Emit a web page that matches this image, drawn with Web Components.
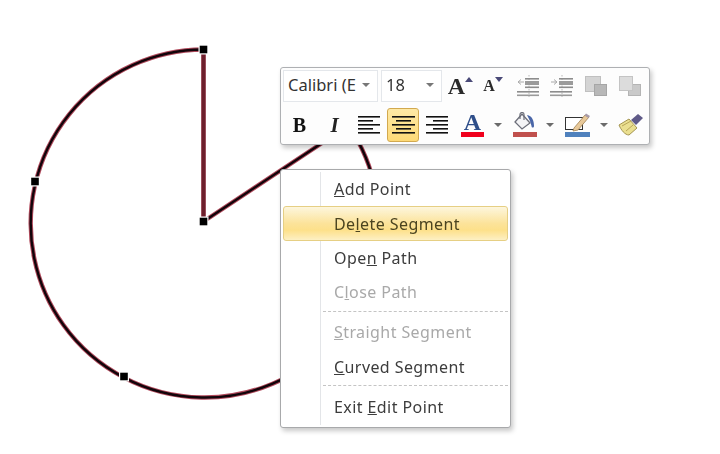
<!DOCTYPE html>
<html>
<head>
<meta charset="utf-8">
<style>
  html, body { margin: 0; background: #fff; }
  body { width: 720px; height: 454px; overflow: hidden; font-family: "Noto Sans", "Open Sans", sans-serif; }
</style>
</head>
<body>
<edit-canvas>
  <shape-path></shape-path>
  <mini-toolbar></mini-toolbar>
  <context-menu>
    <menu-item><u>A</u>dd Point</menu-item>
    <menu-item hot>De<u>l</u>ete Segment</menu-item>
    <menu-item>Ope<u>n</u> Path</menu-item>
    <menu-item disabled>C<u>l</u>ose Path</menu-item>
    <menu-sep></menu-sep>
    <menu-item disabled><u>S</u>traight Segment</menu-item>
    <menu-item><u>C</u>urved Segment</menu-item>
    <menu-sep style="height:6px"></menu-sep>
    <menu-item>Exit <u>E</u>dit Point</menu-item>
  </context-menu>
</edit-canvas>

<script>
class EditCanvas extends HTMLElement {
  constructor() {
    super();
    this.attachShadow({ mode: "open" });
    this.shadowRoot.innerHTML = `
      <style>
        :host { display: block; position: relative; width: 720px; height: 454px; background: #fff; }
      </style>
      <slot></slot>`;
  }
}

// the pie shape with its edit points, free on the slide
class ShapePath extends HTMLElement {
  constructor() {
    super();
    this.attachShadow({ mode: "open" });
    const d = "M203.5 49.5 A174 174 0 1 0 348.5 125.5 L203.5 221.5 Z";
    const nodes = [[203.5, 49.5], [35, 181.5], [124, 376.5], [203.5, 221.5]];
    this.shadowRoot.innerHTML = `
      <style>
        :host { display: block; position: absolute; inset: 0; }
        svg { display: block; filter: blur(.35px); }
      </style>
      <svg width="720" height="454" viewBox="0 0 720 454" fill="none">
        <path d="${d}" stroke="#b04a5c" stroke-width="4.4"/>
        <path d="${d}" stroke="#12040a" stroke-width="2.4"/>
        <path d="M203.5 50 V221" stroke="#6d1f2c" stroke-width="4"/>
        ${nodes.map(n => `<rect x="${n[0] - 5}" y="${n[1] - 5}" width="10" height="10" fill="#fff"/><rect x="${n[0] - 3.8}" y="${n[1] - 3.8}" width="7.6" height="7.6" fill="#000"/>`).join("")}
      </svg>`;
  }
}

class MiniToolbar extends HTMLElement {
  constructor() {
    super();
    this.attachShadow({ mode: "open" });
    const lines = (rows) => rows.map(r => `<rect x="${r[0]}" y="${r[1]}" width="${r[2]}" height="${r[3] || 1.6}" fill="${r[4] || "#111"}"/>`).join("");
    const indentLines = (x) => `
      <path d="M12 0V22" stroke="#b9b9b9" stroke-dasharray="1.5 2"/>
      ${lines([[x, 3, 14, 1.6, "#8d8d8d"], [x, 6, 14, 4, "#9b9b9b"], [x, 11.5, 14, 1.6, "#8d8d8d"], [0, 16, 22, 1.6, "#8d8d8d"], [0, 19.5, 22, 1.6, "#9a9a9a"]])}`;
    this.shadowRoot.innerHTML = `
      <style>
        :host {
          display: block; position: absolute; left: 280px; top: 67px; width: 370px; height: 78px;
          box-sizing: border-box; padding: 2px 2px 1px; background: #fdfdfd;
          border: 1px solid #aeb0b3; border-radius: 3px;
          box-shadow: 2px 3px 5px rgba(0,0,0,.22);
          font-family: "Noto Sans", "Open Sans", sans-serif; color: #333;
          filter: blur(.3px);
        }
        .row { display: flex; align-items: center; height: 32px; }
        .row + .row { height: 34px; margin-top: 6px; }
        .serif { font-family: "Liberation Serif", serif; font-weight: 700; line-height: 1; }
        svg { display: block; }
        .grow { font-size: 24px; color: #2a2a2a; }
        .shrink { font-size: 16px; color: #2a2a2a; }
        .caret { margin-bottom: 14px; }
        .b { font-size: 20px; color: #111; }
        .i { font-size: 21px; color: #222; font-style: italic; }
        .color-a { font-size: 24px; color: #2f4f8a; margin-bottom: -2px; }
        .bar { align-self: stretch; height: 5px; flex: none; }
      </style>
      <div class="row">
        <combo-box style="--w:95px" label="Calibri (E"></combo-box>
        <combo-box style="--w:61px;margin-left:3px" label="18"></combo-box>
        <tool-button style="--w:27px;margin-left:5px"><span class="serif grow">A</span><svg class="caret" width="8" height="5"><path d="M0 5H8L4 0Z" fill="#4a4a78"/></svg></tool-button>
        <tool-button style="--w:24px;margin-left:7px"><span class="serif shrink">A</span><svg class="caret" width="8" height="5"><path d="M0 0H8L4 5Z" fill="#4a4a78"/></svg></tool-button>
        <tool-button style="--w:22px;margin-left:12px"><svg width="22" height="22">${indentLines(8)}<path d="M7 7H1M4 4.5L1 7L4 9.5" stroke="#a9a9a9" fill="none"/></svg></tool-button>
        <tool-button style="--w:23px;margin-left:11px"><svg width="23" height="22">${indentLines(9)}<path d="M1 7H7M4 4.5L7 7L4 9.5" stroke="#a9a9a9" fill="none"/></svg></tool-button>
        <tool-button style="--w:22px;margin-left:12px"><svg width="22" height="20"><rect x=".5" y=".5" width="15" height="15" fill="#d4d4d4" stroke="#c0c0c0"/><rect x="9.5" y="8.5" width="12" height="11" fill="#b8b8b8" stroke="#a6a6a6"/></svg></tool-button>
        <tool-button style="--w:22px;margin-left:12px"><svg width="22" height="20"><rect x="9.5" y="8.5" width="12" height="11" fill="#c9c9c9" stroke="#b4b4b4"/><rect x=".5" y=".5" width="13" height="14" fill="#dcdcdc" stroke="#c4c4c4"/></svg></tool-button>
      </div>
      <div class="row">
        <tool-button style="--w:15px;margin-left:9px"><span class="serif b">B</span></tool-button>
        <tool-button style="--w:15px;margin-left:20px"><span class="serif i">I</span></tool-button>
        <tool-button style="--w:22px;margin-left:16px"><svg width="22" height="18">${lines([[0, 0, 22], [0, 4, 15], [0, 8, 22], [0, 12, 15], [0, 16, 22]])}</svg></tool-button>
        <tool-button active style="--w:32px;margin-left:7px"><svg width="23" height="18">${lines([[0, 0, 23], [4, 4, 15], [0, 8, 23], [4, 12, 15], [0, 16, 23]])}</svg></tool-button>
        <tool-button style="--w:22px;margin-left:7px"><svg width="22" height="18">${lines([[0, 0, 22], [7, 4, 15], [0, 8, 22], [7, 12, 15], [0, 16, 22]])}</svg></tool-button>
        <tool-button column style="--w:23px;margin-left:13px"><span class="serif color-a">A</span><div class="bar" style="background:#f0001c"></div></tool-button>
        <drop-arrow style="margin-left:9px"></drop-arrow>
        <tool-button column style="--w:24px;margin-left:10px">
          <svg width="24" height="20"><path d="M9 2L17 11L9 17L2 10Z" fill="#f4f4f6" stroke="#6d6f7a" stroke-width="1.3"/><path d="M7 7V2.5A2 2 0 0 1 11 2.5V8" fill="none" stroke="#6d6f7a" stroke-width="1.2"/><path d="M14 3C19 4 21 8 21 14C21 16 18.500 16 18.500 14L17 9Z" fill="#4a66a8"/></svg>
          <div class="bar" style="background:#c0504d"></div></tool-button>
        <drop-arrow style="margin-left:8px"></drop-arrow>
        <tool-button column style="--w:25px;margin-left:10px">
          <svg width="25" height="20"><rect x=".5" y="5.500" width="17" height="12" fill="#fff" stroke="#333"/><path d="M9 16L20 3L24 5L13 18L8 19Z" fill="#e8c99a" stroke="#a08050" stroke-width=".8"/><path d="M19.500 3.500L21 1.500L25 4L23.500 6Z" fill="#a89ba8"/></svg>
          <div class="bar" style="background:#4f81bd"></div></tool-button>
        <drop-arrow style="margin-left:9px"></drop-arrow>
        <tool-button style="--w:25px;margin-left:9px"><svg width="25" height="23"><path d="M1 11L11 5L19 14L11 21C7 21 3 16 1 11Z" fill="#eadf90" stroke="#a39450"/><path d="M4 12L13 7M8 17L15 11" stroke="#b8a658"/><path d="M13 6L20 0L25 4L18 11Z" fill="#5f5a88"/></svg></tool-button>
      </div>`;
  }
}

class ComboBox extends HTMLElement {
  constructor() {
    super();
    this.attachShadow({ mode: "open" });
    this.shadowRoot.innerHTML = `
      <style>
        :host {
          display: flex; align-items: center; justify-content: space-between; flex: none;
          width: var(--w); height: 32px; box-sizing: border-box; padding: 0 7px 3px 4px;
          background: #fff; border: 1px solid #e4e7eb; font-size: 16.5px; color: #333;
          white-space: nowrap; overflow: hidden;
        }
        i { flex: none; width: 0; height: 0; border: 4px solid transparent; border-top: 4px solid #777; border-bottom: 0; }
      </style>
      <span></span><i></i>`;
    this.shadowRoot.querySelector("span").textContent = this.getAttribute("label");
  }
}

class ToolButton extends HTMLElement {
  constructor() {
    super();
    this.attachShadow({ mode: "open" });
    this.shadowRoot.innerHTML = `
      <style>
        :host {
          display: flex; align-items: center; justify-content: center; flex: none;
          width: var(--w); height: 34px; box-sizing: border-box;
        }
        :host([column]) { flex-direction: column; justify-content: flex-end; padding-bottom: 5px; }
        :host([active]) {
          background: linear-gradient(#fee9a6, #fdd977); border: 1px solid #d2a94f; border-radius: 3px;
        }
      </style>
      <slot></slot>`;
  }
}

class DropArrow extends HTMLElement {
  constructor() {
    super();
    this.attachShadow({ mode: "open" });
    this.shadowRoot.innerHTML = `
      <style>
        :host { display: flex; justify-content: center; flex: none; width: 10px; }
        i { width: 0; height: 0; border: 4px solid transparent; border-top: 4px solid #6b6b6b; border-bottom: 0; }
      </style>
      <i></i>`;
  }
}

class ContextMenu extends HTMLElement {
  constructor() {
    super();
    this.attachShadow({ mode: "open" });
    this.shadowRoot.innerHTML = `
      <style>
        :host {
          display: flex; flex-direction: column; position: absolute; left: 280px; top: 169px;
          width: 231px; height: 259px; box-sizing: border-box; padding: 2px;
          background: #fff linear-gradient(#e3e5e8, #e3e5e8) 39px 2px / 1px calc(100% - 4px) no-repeat;
          border: 1px solid #a8a9ab; border-radius: 3px;
          box-shadow: 2px 3px 5px rgba(0,0,0,.22);
          font-family: "Noto Sans", "Open Sans", sans-serif;
        }
      </style>
      <slot></slot>`;
  }
}

class MenuItem extends HTMLElement {
  constructor() {
    super();
    this.attachShadow({ mode: "open" });
    this.shadowRoot.innerHTML = `
      <style>
        :host {
          display: flex; align-items: center; flex: none; height: 34.4px; box-sizing: border-box;
          padding-left: 51px; font-size: 16px; letter-spacing: .42px; color: #3c3c3c;
          white-space: pre; filter: blur(.25px);
        }
        :host([disabled]) { color: #a9a9a9; }
        :host([hot]) {
          padding-left: 50px; color: #4b4420; border: 1px solid #e6cf84; border-radius: 3px;
          background: linear-gradient(#fdf6dd, #fce39a 50%, #fde08a 70%, #fdf0c4);
        }
      </style>
      <span><slot></slot></span>`;
  }
}

class MenuSep extends HTMLElement {
  constructor() {
    super();
    this.attachShadow({ mode: "open" });
    this.shadowRoot.innerHTML = `
      <style>
        :host { display: block; flex: none; height: 5.4px; box-sizing: border-box; margin-left: 40px; padding-top: 1px; }
        div { border-top: 1px dashed #c4c4c4; }
      </style>
      <div></div>`;
  }
}

customElements.define("edit-canvas", EditCanvas);
customElements.define("shape-path", ShapePath);
customElements.define("mini-toolbar", MiniToolbar);
customElements.define("combo-box", ComboBox);
customElements.define("tool-button", ToolButton);
customElements.define("drop-arrow", DropArrow);
customElements.define("context-menu", ContextMenu);
customElements.define("menu-item", MenuItem);
customElements.define("menu-sep", MenuSep);
</script>
</body>
</html>
